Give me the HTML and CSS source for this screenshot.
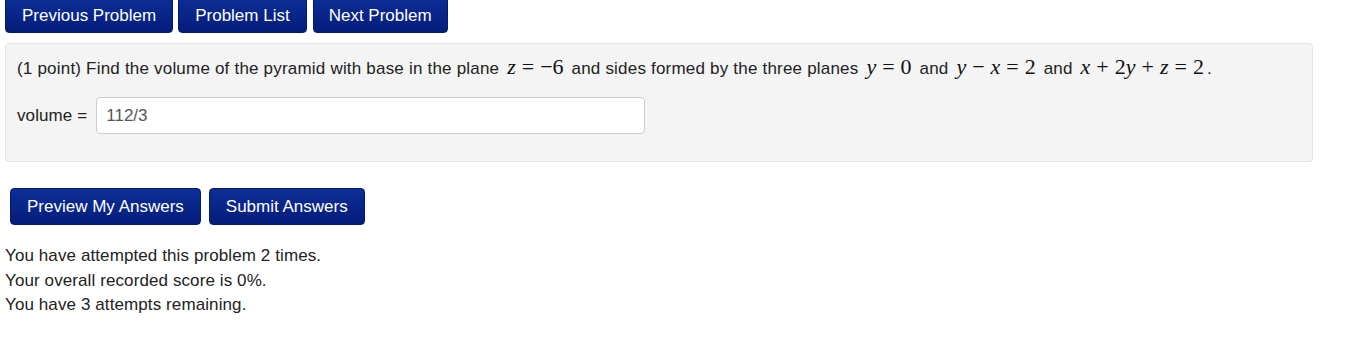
FILE: index.html
```html
<!DOCTYPE html>
<html>
<head>
<meta charset="utf-8">
<link rel="stylesheet" href="styles.css">
</head>
<body>
<div class="nav">
  <button class="btn">Previous Problem</button>
  <button class="btn">Problem List</button>
  <button class="btn">Next Problem</button>
</div>
<div class="problem">
  <p class="statement">(1 point) Find the volume of the pyramid with base in the plane <span class="m"><i>z</i><span class="op">=</span>−6</span> and sides formed by the three planes <span class="m"><i>y</i><span class="op">=</span>0</span> and <span class="m"><i>y</i><span class="op">−</span><i>x</i><span class="op">=</span>2</span> and <span class="m"><i>x</i><span class="op">+</span>2<i>y</i><span class="op">+</span><i>z</i><span class="op">=</span>2</span>.</p>
  <div class="answer">
    <label class="lbl">volume =</label>
    <input class="field" type="text" value="112/3">
  </div>
</div>
<div class="actions">
  <button class="btn btn-lg">Preview My Answers</button>
  <button class="btn btn-lg">Submit Answers</button>
</div>
<div class="status">
  <div>You have attempted this problem 2 times.</div>
  <div>Your overall recorded score is 0%.</div>
  <div>You have 3 attempts remaining.</div>
</div>
</body>
</html>
```
FILE: styles.css
```css
body {
  margin: 0;
  padding: 0 5px;
  font-family: "Liberation Sans", Arial, sans-serif;
  font-size: 17px;
  letter-spacing: 0.1px;
  color: #222;
  background: #fff;
}
.btn {
  font-family: "Liberation Sans", Arial, sans-serif;
  font-size: 17px;
  color: #fff;
  background: linear-gradient(#0c2f98, #041c7a);
  border: 1px solid #061a6a;
  border-radius: 4px;
  height: 37px;
  padding: 0 16px;
  margin: 0;
  line-height: 1;
}
.nav {
  display: flex;
  gap: 5px;
  margin-top: -4px;
}
.nav .btn {
  height: 37px;
  padding: 1px 16px 0;
}
.nav .btn:nth-child(3) { margin-left: 1px; padding: 1px 15px 0; }
.problem {
  margin-top: 10px;
  width: 1306px;
  height: 117px;
  background: #f4f4f4;
  border: 1px solid #e3e3e3;
  border-radius: 4px;
}
.statement {
  margin: 0;
  padding: 13px 0 0 11px;
  line-height: 20px;
  white-space: nowrap;
  letter-spacing: 0.2px;
}
.m {
  font-family: "Liberation Serif", "Times New Roman", serif;
  font-size: 22px;
  letter-spacing: 0;
  color: #111;
  margin: 0 3px;
}
.m i { font-style: italic; }
.op { margin: 0 6px; }
.answer {
  display: flex;
  align-items: center;
  margin: 18px 0 0 11px;
}
.lbl { margin-right: 9px; }
.field {
  width: 549px;
  height: 37px;
  box-sizing: border-box;
  border: 1px solid #ccc;
  border-radius: 4px;
  background: #fff;
  padding: 0 9px;
  font-family: "Liberation Sans", Arial, sans-serif;
  font-size: 17px;
  color: #555;
}
.actions {
  display: flex;
  gap: 8px;
  margin: 26px 0 0 5px;
}
.btn-lg {
  height: 37px;
  padding: 0 16px;
}
.status {
  margin-top: 19px;
  line-height: 24.5px;
}
```
